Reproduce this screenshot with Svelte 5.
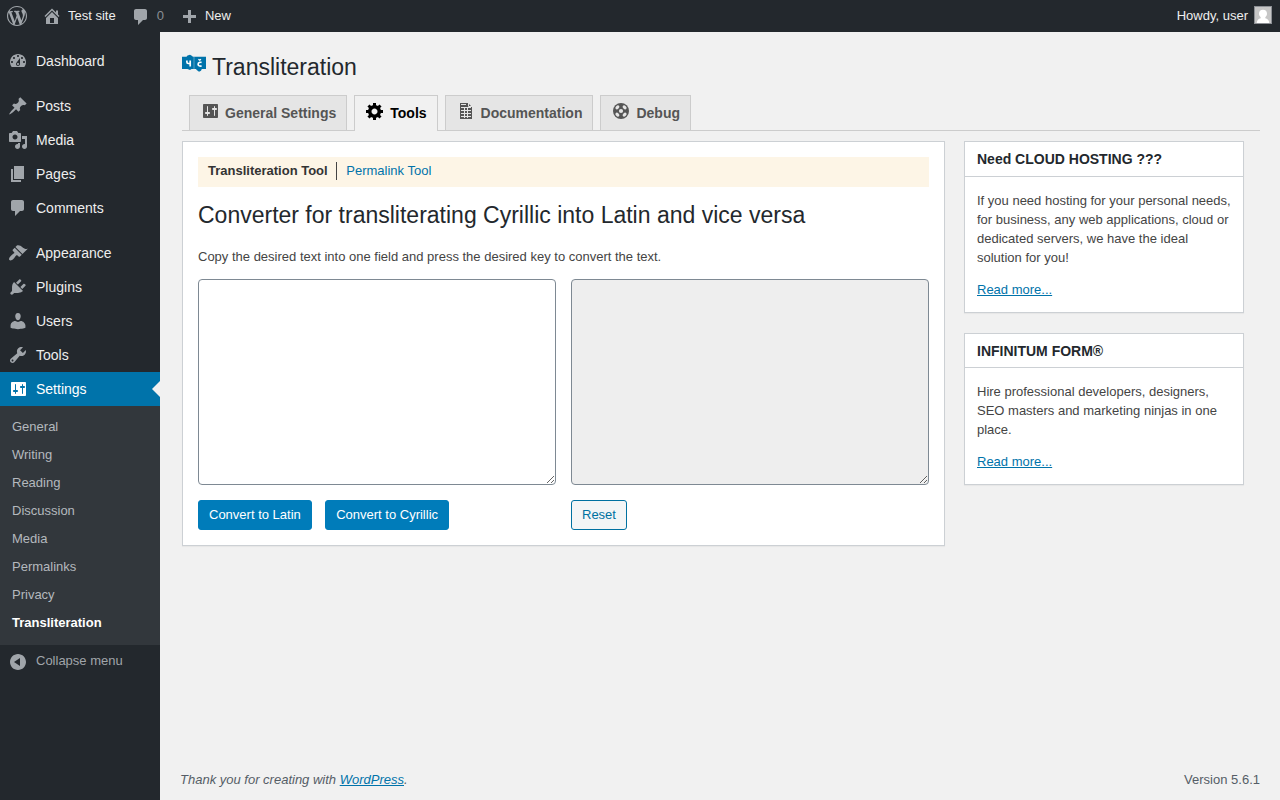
<script>
  const icons = {
    wordpress: 'M20 10c0-5.51-4.49-10-10-10C4.48 0 0 4.49 0 10c0 5.52 4.48 10 10 10 5.51 0 10-4.48 10-10zM7.78 15.37L4.37 6.22c.55-.02 1.17-.08 1.17-.08.5-.06.44-1.13-.06-1.11 0 0-1.45.11-2.37.11-.18 0-.37 0-.58-.01C4.12 2.69 6.87 1.11 10 1.11c2.33 0 4.45.87 6.05 2.34-.68-.11-1.65.39-1.65 1.58 0 .74.45 1.36.9 2.1.35.61.55 1.36.55 2.46 0 1.49-1.4 5-1.4 5l-3.03-8.37c.54-.02.82-.17.82-.17.5-.05.44-1.25-.06-1.22 0 0-1.44.12-2.38.12-.87 0-2.33-.12-2.33-.12-.5-.03-.56 1.2-.06 1.22l.92.08 1.26 3.41zM17.41 10c.24-.64.74-1.87.43-4.25.7 1.29 1.05 2.71 1.05 4.25 0 3.29-1.73 6.24-4.4 7.78.97-2.59 1.94-5.2 2.92-7.78zM6.1 18.09C3.12 16.65 1.11 13.53 1.11 10c0-1.3.23-2.48.72-3.59C3.25 10.3 4.67 14.2 6.1 18.09zm4.03-6.63l2.58 6.98c-.86.29-1.76.45-2.71.45-.79 0-1.57-.11-2.29-.33.81-2.38 1.62-4.74 2.42-7.1z',
    home: 'M16 8.5l1.53 1.53-1.06 1.06L10 4.6l-6.47 6.49-1.06-1.06L10 2.5l4 4v-2h2v4zm-6-2.46l6 5.99V18H4v-5.97zM12 17v-5H8v5h4z',
    comments: 'M5 2h9c1.1 0 2 .9 2 2v7c0 1.1-.9 2-2 2h-2l-5 5v-5H5c-1.1 0-2-.9-2-2V4c0-1.1.9-2 2-2z',
    plus: 'M17 7v3h-5v5H9v-5H4V7h5V2h3v5h5z',
    dashboard: 'M3.76 16h12.48c1.1-1.37 1.76-3.11 1.76-5 0-4.42-3.58-8-8-8s-8 3.58-8 8c0 1.89.66 3.63 1.76 5zM10 4c.55 0 1 .45 1 1s-.45 1-1 1-1-.45-1-1 .45-1 1-1zM6 6c.55 0 1 .45 1 1s-.45 1-1 1-1-.45-1-1 .45-1 1-1zm8 0c.55 0 1 .45 1 1s-.45 1-1 1-1-.45-1-1 .45-1 1-1zm-5.37 5.55L12 7v6c0 1.1-.9 2-2 2s-2-.9-2-2c0-.57.24-1.08.63-1.45zM4 10c.55 0 1 .45 1 1s-.45 1-1 1-1-.45-1-1 .45-1 1-1zm12 0c.55 0 1 .45 1 1s-.45 1-1 1-1-.45-1-1 .45-1 1-1zm-5 3c0-.55-.45-1-1-1s-1 .45-1 1 .45 1 1 1 1-.45 1-1z',
    posts: 'M10.44 3.02l1.82-1.82 6.36 6.35-1.83 1.82c-1.05-.68-2.48-.57-3.41.36l-.75.75c-.92.93-1.04 2.35-.35 3.41l-1.83 1.82-2.41-2.41-2.8 2.79c-.42.42-3.38 2.71-3.8 2.29s1.86-3.39 2.28-3.81l2.79-2.79L4.1 9.36l1.83-1.82c1.05.69 2.48.57 3.4-.36l.75-.75c.93-.92 1.05-2.35.36-3.41z',
    media: 'M13 11V4c0-.55-.45-1-1-1h-1.67L9 1H5L3.67 3H2c-.55 0-1 .45-1 1v7c0 .55.45 1 1 1h10c.55 0 1-.45 1-1zM7 4.5c1.38 0 2.5 1.12 2.5 2.5S8.38 9.5 7 9.5 4.5 8.38 4.5 7 5.62 4.5 7 4.5zM14 6h5v10.5c0 1.38-1.12 2.5-2.5 2.5S14 17.88 14 16.5s1.12-2.5 2.5-2.5c.17 0 .34.02.5.05V9h-3V6zm-4 8.05V13h2v3.5c0 1.38-1.12 2.5-2.5 2.5S7 17.88 7 16.5 8.12 14 9.5 14c.17 0 .34.02.5.05z',
    pages: 'M6 15V2h10v13H6zm-1 1h8v2H3V5h2v11z',
    appearance: 'M14.48 11.06L7.41 3.99l1.5-1.5c.5-.56 2.3-.47 3.51.32 1.21.8 1.43 1.28 2.91 2.1 1.18.64 2.45 1.26 4.45.85zm-.71.71L6.7 4.7 4.93 6.47c-.39.39-.39 1.02 0 1.41l1.06 1.06c.39.39.39 1.03 0 1.42-.6.6-1.43 1.11-2.21 1.69-.35.26-.7.53-1.01.84C1.43 14.23.4 16.08 1.4 17.07c.99 1 2.84-.03 4.18-1.36.31-.31.58-.66.85-1.02.57-.78 1.08-1.61 1.69-2.21.39-.39 1.02-.39 1.41 0l1.06 1.06c.39.39 1.02.39 1.41 0z',
    plugins: 'M13.11 4.36L9.87 7.6 8 5.73l3.24-3.24c.35-.34 1.05-.2 1.56.32.52.51.66 1.21.31 1.55zm-8 1.77l.91-1.12 9.01 9.01-1.19.84c-.71.71-2.63 1.16-3.82 1.16H6.14L4.9 17.26c-.59.59-1.54.59-2.12 0-.59-.58-.59-1.53 0-2.12l1.24-1.24v-3.88c0-1.13.4-3.19 1.09-3.89zm7.26 3.97l3.24-3.24c.34-.35 1.04-.21 1.55.31.52.51.66 1.21.31 1.55l-3.24 3.25z',
    users: 'M10 9.25c-2.27 0-2.73-3.44-2.73-3.44C7 4.02 7.82 2 9.97 2c2.16 0 2.98 2.02 2.71 3.81 0 0-.41 3.44-2.68 3.44zM10 11.100L12.720 10c2.390 0 4.720 2.330 4.720 4.530v2.300s-3.650 1.320-7.440 1.320c-3.790 0-7.440-1.320-7.440-1.320v-2.300c0-2.250 2.140-4.480 4.670-4.480z',
    tools: 'M16.68 9.77c-1.34 1.34-3.3 1.67-4.95.99l-5.41 6.52c-.99.99-2.59.99-3.58 0s-.99-2.59 0-3.57l6.52-5.42c-.68-1.65-.35-3.61.99-4.95 1.28-1.28 3.12-1.62 4.72-1.06l-2.89 2.89 2.82 2.82 2.86-2.87c.53 1.58.18 3.39-1.08 4.65zM3.81 16.21c.4.39 1.04.39 1.43 0 .4-.4.4-1.04 0-1.43-.39-.4-1.03-.4-1.43 0-.39.39-.39 1.03 0 1.43z',
    settings: 'M18 16V4c0-.55-.45-1-1-1H4c-.55 0-1 .45-1 1v12c0 .55.45 1 1 1h13c.55 0 1-.45 1-1zM8 11h1c.55 0 1 .45 1 1s-.45 1-1 1H8v1.5c0 .28-.22.5-.5.5s-.5-.22-.5-.5V13H6c-.55 0-1-.45-1-1s.45-1 1-1h1V5.5c0-.28.22-.5.5-.5s.5.22.5.5V11zm6-2h-1c-.55 0-1-.45-1-1s.45-1 1-1h1V5.500c0-.28.22-.5.5-.5s.5.22.5.5V7h1c.55 0 1 .45 1 1s-.45 1-1 1h-1v5.500c0 .28-.22.5-.5.5s-.5-.22-.5-.5V9z',
    collapse: 'M10 2c4.42 0 8 3.58 8 8s-3.58 8-8 8-8-3.58-8-8 3.58-8 8-8zM12 14V6l-6 4z',
    generic: 'M18 12h-2.18c-.17.7-.44 1.35-.81 1.93l1.54 1.54-2.1 2.1-1.54-1.54c-.58.36-1.23.63-1.91.79V19H8v-2.18c-.68-.16-1.33-.43-1.91-.79l-1.54 1.54-2.12-2.12 1.54-1.54c-.36-.58-.63-1.23-.79-1.91H1V9.03h2.17c.16-.7.44-1.35.8-1.94L2.43 5.55l2.1-2.1 1.54 1.54c.58-.37 1.24-.64 1.93-.81V2h3v2.18c.68.16 1.33.43 1.91.79l1.54-1.54 2.12 2.12-1.54 1.54c.36.59.64 1.24.8 1.94H18V12zm-8.5 1.5c1.66 0 3-1.34 3-3s-1.34-3-3-3-3 1.34-3 3 1.34 3 3 3z',
  };

  const groups = [
    [['dashboard', 'Dashboard']],
    [['posts', 'Posts'], ['media', 'Media'], ['pages', 'Pages'], ['comments', 'Comments']],
    [['appearance', 'Appearance'], ['plugins', 'Plugins'], ['users', 'Users'], ['tools', 'Tools'], ['settings', 'Settings']],
  ];
  const submenu = ['General', 'Writing', 'Reading', 'Discussion', 'Media', 'Permalinks', 'Privacy', 'Transliteration'];
  const tabs = [
    ['settings', 'General Settings'],
    ['generic', 'Tools'],
    ['sheet', 'Documentation'],
    ['sos', 'Debug'],
  ];
</script>

{#snippet icon(name)}
  <svg class="icon" viewBox="0 0 20 20" aria-hidden="true">
    {#if name === 'sheet'}
      <path d="M4 2h8l4 4v12H4z" />
      <path class="rule" d="M5 3.500h5M12.500 2v3.500H16M5 6.500h10M5 9.500h10M5 12.500h10M5 15.500h10M8.500 7v10M11.500 7v10" />
    {:else if name === 'sos'}
      <circle cx="10" cy="10" r="8" />
      <g class="cut">
        <ellipse cx="10" cy="4.900" rx="2.300" ry="1.600" transform="rotate(45 10 10)" />
        <ellipse cx="10" cy="4.900" rx="2.300" ry="1.600" transform="rotate(135 10 10)" />
        <ellipse cx="10" cy="4.900" rx="2.300" ry="1.600" transform="rotate(225 10 10)" />
        <ellipse cx="10" cy="4.900" rx="2.300" ry="1.600" transform="rotate(315 10 10)" />
        <circle cx="10" cy="10" r="2.100" />
      </g>
    {:else}
      <path fill-rule="evenodd" d={icons[name]} />
    {/if}
  </svg>
{/snippet}

<div class="page">
  <header class="bar">
    <span class="wp">{@render icon('wordpress')}</span>
    <span class="site">{@render icon('home')}Test site</span>
    <span class="count">{@render icon('comments')}0</span>
    <span class="new">{@render icon('plus')}New</span>
    <span class="user">Howdy, user
      <svg class="avatar" viewBox="0 0 18 18" aria-hidden="true">
        <rect width="18" height="18" fill="#8c8f94" />
        <rect x="1" y="1" width="16" height="16" fill="#c6c6c6" />
        <path fill="#fff" d="M9 3.8c2.5 0 4 1.6 4 4 0 1.6-.8 2.6-1.7 3.4v1c2.3.6 3.6 1.7 4 4.8H2.7c.4-3.1 1.7-4.2 4-4.8v-1C5.8 10.4 5 9.4 5 7.8c0-2.4 1.5-4 4-4z" />
      </svg>
    </span>
  </header>

  <div class="body">
    <nav class="side">
      {#each groups as group}
        <ul class="group">
          {#each group as [name, label]}
            <li class="item" class:current={name === 'settings'}>{@render icon(name)}<span>{label}</span></li>
          {/each}
        </ul>
      {/each}
      <ul class="sub">
        {#each submenu as label}
          <li class:active={label === 'Transliteration'}>{label}</li>
        {/each}
      </ul>
      <div class="item collapse">{@render icon('collapse')}<span>Collapse menu</span></div>
    </nav>

    <main>
      <h1>
        <svg class="logo" viewBox="0 0 24 18" aria-hidden="true">
          <path fill="#0073aa" d="M0 2.800h4.500L5.500 1.500 8 .8l2.200 1.100.6.900H24v12.300h-4.200l-.8 1.700-2 1-2.300-1.700-.7-1H9.500l-1.500.8-2.500-.8H0z" />
          <path fill="none" stroke="#f1f1f1" stroke-width=".6" stroke-opacity=".6" d="M12 2.800v12.300" />
          <path fill="none" stroke="#fff" stroke-width="1.700" d="M4.900 6.600v1.500q0 1.400 1.300 1.400h2M8.200 6.600v6M19.600 8.600q-1-.5-1.900-.3-1.600.3-1.600 1.900t1.600 1.800q1 .2 1.900-.3" />
          <path fill="none" stroke="#fff" stroke-width="1.100" d="M16.400 5.300l1.300 1 1.300-1" />
        </svg>
        Transliteration
      </h1>

      <div class="tabs">
        {#each tabs as [name, label]}
          <a class="tab" class:on={label === 'Tools'}>{@render icon(name)}<span>{label}</span></a>
        {/each}
      </div>

      <div class="columns">
        <section class="card tool">
          <div class="switch"><b>Transliteration Tool</b><a>Permalink Tool</a></div>
          <h2>Converter for transliterating Cyrillic into Latin and vice versa</h2>
          <p>Copy the desired text into one field and press the desired key to convert the text.</p>
          <div class="fields">
            <div>
              <textarea aria-label="Source"></textarea>
              <div class="buttons"><button class="primary">Convert to Latin</button><button class="primary">Convert to Cyrillic</button></div>
            </div>
            <div>
              <textarea class="result" readonly aria-label="Result"></textarea>
              <div class="buttons"><button class="reset">Reset</button></div>
            </div>
          </div>
        </section>

        <aside>
          <section class="card">
            <h3>Need CLOUD HOSTING ???</h3>
            <div class="inside">
              <p>If you need hosting for your personal needs, for business, any web applications, cloud or dedicated servers, we have the ideal solution for you!</p>
              <p><a class="link">Read more...</a></p>
            </div>
          </section>
          <section class="card second">
            <h3>INFINITUM FORM®</h3>
            <div class="inside">
              <p>Hire professional developers, designers, SEO masters and marketing ninjas in one place.</p>
              <p><a class="link">Read more...</a></p>
            </div>
          </section>
        </aside>
      </div>

      <footer>
        <i>Thank you for creating with <a class="link">WordPress</a>.</i>
        <span>Version 5.6.1</span>
      </footer>
    </main>
  </div>
</div>

<style>
  :global(body) { background: #f1f1f1; }
  * { box-sizing: border-box; }
  .page {
    display: flex;
    flex-direction: column;
    height: 800px;
    overflow: hidden;
    font: 13px/19px "Liberation Sans", Arial, sans-serif;
    color: #444;
  }
  h1, h2, h3, p, ul { margin: 0; padding: 0; list-style: none; }
  .icon { width: 20px; height: 20px; flex: none; fill: currentColor; }
  a { color: #0073aa; }
  .link { text-decoration: underline; }

  .bar {
    flex: none;
    display: flex;
    height: 32px;
    padding: 0 8px 0 7px;
    background: #23282d;
    color: #eee;
    line-height: 32px;
  }
  .bar > span { display: flex; }
  .bar .icon { margin-top: 6px; color: #a0a5aa; }
  .site { margin-left: 15px; }
  .site .icon { margin-right: 6px; }
  .count { margin-left: 15px; color: #8a8f94; }
  .bar .count .icon { margin: 7px 6px 0 0; }
  .new { margin-left: 15px; }
  .bar .new .icon { margin: 8px 6px 0 0; }
  .user { margin-left: auto; }
  .avatar { width: 18px; height: 18px; margin: 6px 0 0 6px; }

  .body { flex: 1; display: flex; min-height: 0; }
  .side { width: 160px; flex: none; padding-top: 12px; background: #23282d; }
  .group + .group { margin-top: 11px; }
  .item {
    display: flex;
    align-items: center;
    height: 34px;
    padding-left: 8px;
    gap: 8px;
    font-size: 14px;
    color: #eee;
  }
  .item .icon { color: #a0a5aa; }
  .current { position: relative; background: #0073aa; color: #fff; }
  .current .icon { color: #fff; }
  .current::after {
    content: "";
    position: absolute;
    right: 0;
    top: 9px;
    border: 8px solid transparent;
    border-right-color: #f1f1f1;
    border-left: 0;
  }
  .sub { padding: 7px 0 8px 12px; background: #32373c; color: #b4b9be; }
  .sub li { height: 28px; line-height: 27px; }
  .sub .active { color: #fff; font-weight: bold; }
  .collapse { height: 33px; font-size: 13px; color: #a0a5aa; }
  .collapse span { margin-top: -2px; }

  main { flex: 1; display: flex; flex-direction: column; padding: 0 20px 0 22px; }
  h1 {
    display: flex;
    height: 63px;
    padding-top: 20px;
    font-size: 23px;
    font-weight: 400;
    line-height: 30px;
    color: #23282d;
  }
  .logo { width: 24px; height: 18px; margin: 2px 6px 0 0; }
  .tabs { display: flex; gap: 7px; height: 36px; padding-left: 7px; border-bottom: 1px solid #ccc; }
  .tab {
    display: flex;
    height: 35px;
    padding: 5px 10px;
    border: 1px solid #ccc;
    border-bottom: 0;
    background: #e5e5e5;
    color: #555;
    font-size: 14px;
    font-weight: bold;
    line-height: 24px;
    white-space: nowrap;
  }
  .tab .icon { margin-right: 5px; }
  .tab.on { height: 36px; background: #f1f1f1; color: #000; }
  .rule { fill: none; stroke: #e5e5e5; stroke-width: 1; }
  .cut { fill: #e5e5e5; }

  .columns { display: flex; gap: 19px; margin-top: 10px; align-items: flex-start; }
  .card { background: #fff; border: 1px solid #ccd0d4; box-shadow: 0 1px 1px rgba(0, 0, 0, .04); }
  .tool { width: 763px; height: 405px; padding: 15px; }
  .switch { display: flex; height: 30px; padding: 5px 10px; background: #fdf5e6; line-height: 18px; }
  .switch b { height: 18px; padding-right: 8px; margin-right: 9.6px; border-right: 1px solid #444; color: #333; }
  h2 { margin-top: 13px; font-size: 23px; font-weight: 400; line-height: 30px; color: #23282d; }
  .tool > p { margin-top: 17px; }
  .fields { display: grid; grid-template-columns: 1fr 1fr; gap: 15px; margin-top: 13px; }
  textarea {
    display: block;
    width: 100%;
    height: 206px;
    border: 1px solid #7e8993;
    border-radius: 4px;
    background: #fff;
  }
  .result { background: #eee; }
  .buttons { display: flex; gap: 13.4px; margin-top: 15px; }
  button {
    height: 30px;
    padding: 0 10px;
    border: 1px solid #007cba;
    border-radius: 3px;
    background: #007cba;
    color: #fff;
    font: 13px/28px "Liberation Sans", Arial, sans-serif;
  }
  .reset { border-color: #0071a1; background: #f3f5f6; color: #0071a1; }

  aside { width: 280px; }
  h3 {
    height: 35px;
    padding-left: 12px;
    border-bottom: 1px solid #ccd0d4;
    font-size: 14px;
    line-height: 34px;
    color: #23282d;
  }
  .second { margin-top: 20px; }
  .second h3 { height: 34px; }
  .inside { padding: 14px 12px 13px; }
  .inside p + p { margin-top: 13px; }
  footer { display: flex; justify-content: space-between; margin: auto 0 11px -2px; color: #555d66; }
</style>
